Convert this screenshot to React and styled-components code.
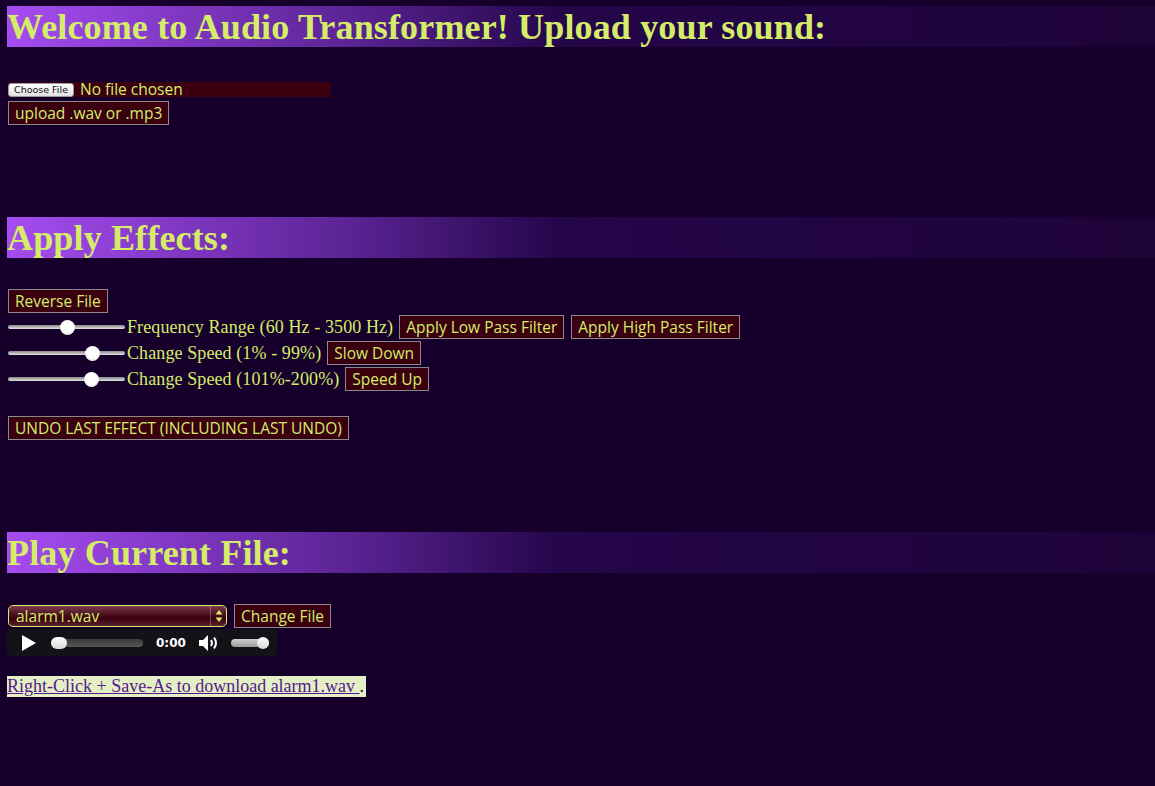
import styled, { createGlobalStyle } from 'styled-components';

const GlobalStyle = createGlobalStyle`
  html, body {
    margin: 0;
    background-color: #16002b;
  }
  body {
    padding: 6px 0 0 7px;
    font-family: "Liberation Serif", "Times New Roman", serif;
    color: #d4ec68;
  }
`;

const App = () => {
  return (
    <Page>
      <GlobalStyle />
      <Section>
        <Heading>Welcome to Audio Transformer! Upload your sound:</Heading>
        <UploadForm>
          <FileField>
            <ChooseButton type="button">Choose File</ChooseButton>
            <FileName>No file chosen</FileName>
          </FileField>
          <Button type="submit">upload .wav or .mp3</Button>
        </UploadForm>
      </Section>

      <Section $top={92}>
        <Heading>Apply Effects:</Heading>
        <EffectList>
          <Row>
            <Button>Reverse File</Button>
          </Row>
          <Row>
            <Slider type="range" min="60" max="3500" defaultValue="1800" />
            <Label>Frequency Range (60 Hz - 3500 Hz)</Label>
            <Button>Apply Low Pass Filter</Button>
            <Button>Apply High Pass Filter</Button>
          </Row>
          <Row>
            <Slider type="range" min="1" max="99" defaultValue="75" />
            <Label>Change Speed (1% - 99%)</Label>
            <Button>Slow Down</Button>
          </Row>
          <Row>
            <Slider type="range" min="101" max="200" defaultValue="175" />
            <Label>Change Speed (101%-200%)</Label>
            <Button>Speed Up</Button>
          </Row>
          <Row $top={23}>
            <Button>UNDO LAST EFFECT (INCLUDING LAST UNDO)</Button>
          </Row>
        </EffectList>
      </Section>

      <Section $top={92}>
        <Heading>Play Current File:</Heading>
        <PlayerArea>
          <Row>
            <SelectBox>
              <span>alarm1.wav</span>
              <SelectArrows>
                <svg width="8" height="14" viewBox="0 0 8 14">
                  <path d="M4 1 L7.5 5.5 H0.5 Z" fill="#d4ec68" />
                  <path d="M4 13 L7.5 8.5 H0.5 Z" fill="#d4ec68" />
                </svg>
              </SelectArrows>
            </SelectBox>
            <Button>Change File</Button>
          </Row>
          <Player>
            <svg width="16" height="18" viewBox="0 0 16 18">
              <path d="M1 1 L15 9 L1 17 Z" fill="#fff" />
            </svg>
            <Track $width={92}>
              <Knob $left={0} $width={16} />
            </Track>
            <Time>0:00</Time>
            <svg width="22" height="18" viewBox="0 0 22 18">
              <path d="M1 6 H5 L10 1 V17 L5 12 H1 Z" fill="#fff" />
              <path d="M13 6 Q15 9 13 12" stroke="#fff" strokeWidth="2" fill="none" />
              <path d="M16 3.5 Q20 9 16 14.5" stroke="#fff" strokeWidth="2" fill="none" />
            </svg>
            <Track $width={38} $light>
              <Knob $left={26} $width={12} />
            </Track>
          </Player>
        </PlayerArea>
        <DownloadLine>
          <Download href="#">Right-Click + Save-As to download alarm1.wav </Download>
          {' '}.
        </DownloadLine>
      </Section>
    </Page>
  );
};

const Page = styled.div`
  display: flex;
  flex-direction: column;
  padding-bottom: 80px;
`;

const Section = styled.section`
  display: flex;
  flex-direction: column;
  margin-top: ${(p) => p.$top || 0}px;
`;

const Heading = styled.h1`
  margin: 0;
  height: 41px;
  line-height: 42px;
  font-size: 36px;
  font-weight: bold;
  letter-spacing: 0.15px;
  white-space: nowrap;
  color: #d4ec68;
  background: linear-gradient(to right, #a64cf2 0%, #5a2393 30%, #24064a 48%, #1e0338 100%);
`;

const UploadForm = styled.form`
  display: flex;
  flex-direction: column;
  align-items: flex-start;
  gap: 4px;
  margin: 35px 0 0 1px;
`;

const FileField = styled.div`
  display: flex;
  align-items: center;
  width: 323px;
  height: 15px;
  background-color: #3a0010;
`;

const ChooseButton = styled.button`
  height: 14px;
  padding: 0 5px;
  border: 1px solid #9a9a9a;
  border-radius: 3px;
  background: linear-gradient(#ffffff, #e2e2e2);
  color: #111;
  font-family: "DejaVu Sans", "Liberation Sans", sans-serif;
  font-size: 9.5px;
  line-height: 12px;
`;

const FileName = styled.span`
  margin-left: 6px;
  font-family: "Open Sans", "DejaVu Sans", sans-serif;
  font-size: 15.5px;
  font-weight: 500;
  line-height: 15px;
`;

const Button = styled.button`
  height: 24px;
  padding: 0 6px;
  border: 1px solid #8a8a8a;
  border-radius: 0;
  background-color: #3a0010;
  color: #d4ec68;
  font-family: "Open Sans", "DejaVu Sans", sans-serif;
  font-size: 15.5px;
  font-weight: 500;
  line-height: 22px;
  white-space: nowrap;
`;

const EffectList = styled.div`
  display: flex;
  flex-direction: column;
  gap: 2px;
  margin: 31px 0 0 1px;
`;

const Row = styled.div`
  display: flex;
  align-items: center;
  gap: 7px;
  margin-top: ${(p) => p.$top || 0}px;
`;

const Slider = styled.input`
  -webkit-appearance: none;
  appearance: none;
  width: 117px;
  height: 14px;
  margin: 0 -5px 0 0;
  background: transparent;

  &::-webkit-slider-runnable-track {
    height: 4px;
    border-radius: 2px;
    background: linear-gradient(#8a8a8a, #e0e0e0);
  }

  &::-webkit-slider-thumb {
    -webkit-appearance: none;
    width: 15px;
    height: 15px;
    margin-top: -5.5px;
    border-radius: 50%;
    background: radial-gradient(circle at 50% 35%, #ffffff 55%, #d6d6d6);
    box-shadow: 0 1px 1px rgba(0, 0, 0, 0.5);
  }
`;

const Label = styled.span`
  margin-right: -1px;
  font-size: 18px;
  line-height: 20px;
  letter-spacing: 0.1px;
  white-space: nowrap;
`;

const PlayerArea = styled.div`
  display: flex;
  flex-direction: column;
  align-items: flex-start;
  gap: 1px;
  margin: 31px 0 0 1px;
`;

const SelectBox = styled.div`
  display: flex;
  align-items: center;
  justify-content: space-between;
  box-sizing: border-box;
  width: 219px;
  height: 22px;
  padding-left: 7px;
  border: 1px solid #d4ec68;
  border-radius: 5px;
  background: linear-gradient(#7b3c4a 0%, #4a0e1e 45%, #3a0010 60%, #5a2030 100%);
  font-family: "Open Sans", "DejaVu Sans", sans-serif;
  font-size: 15.5px;
  font-weight: 500;
  line-height: 20px;
`;

const SelectArrows = styled.span`
  display: flex;
  align-items: center;
  justify-content: center;
  width: 15px;
  height: 100%;
  border-left: 1px solid rgba(255, 255, 255, 0.25);
`;

const Player = styled.div`
  display: flex;
  align-items: center;
  box-sizing: border-box;
  width: 270px;
  height: 27px;
  margin-left: -1px;
  padding-left: 14px;
  border-radius: 4px;
  background-color: #131216;

  & > svg:first-child {
    margin-right: 14px;
  }

  & > svg:nth-of-type(2) {
    margin: 0 11px 0 12px;
  }
`;

const Track = styled.div`
  position: relative;
  width: ${(p) => p.$width}px;
  height: 8px;
  border-radius: 4px;
  background: ${(p) => (p.$light ? 'linear-gradient(#cfcfcf, #9a9a9a)' : 'linear-gradient(#3a3a3a, #555)')};
`;

const Knob = styled.span`
  position: absolute;
  top: -2px;
  left: ${(p) => p.$left}px;
  width: ${(p) => p.$width}px;
  height: 12px;
  border-radius: 6px;
  background: linear-gradient(#ffffff, #d8d8d8);
`;

const Time = styled.span`
  margin-left: 13px;
  color: #fff;
  font-family: "DejaVu Sans", "Liberation Sans", sans-serif;
  font-size: 12px;
  font-weight: bold;
`;

const DownloadLine = styled.p`
  align-self: flex-start;
  margin: 20px 0 0;
  padding-right: 2px;
  background-color: #e4efc6;
  color: #2a1050;
  font-size: 18px;
  line-height: 21px;
`;

const Download = styled.a`
  color: #551a8b;
  text-decoration: underline;
`;

export default App;
